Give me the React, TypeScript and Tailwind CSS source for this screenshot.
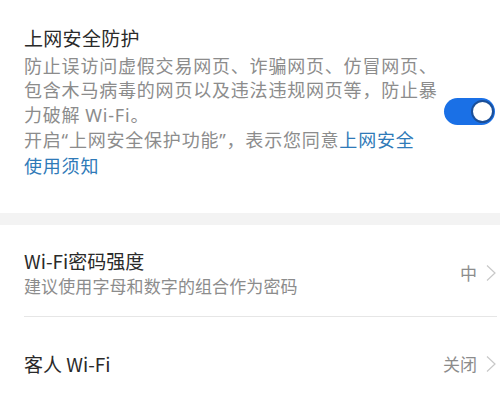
import React from "react";

const font = { fontFamily: '"Noto Sans CJK SC", "Noto Sans", sans-serif' };
const latin = { fontFamily: '"Noto Sans", "Noto Sans CJK SC", sans-serif' };

function Chevron() {
  return (
    <svg width="12" height="18" viewBox="0 0 12 18" className="shrink-0">
      <path d="M2 1.5 L10 9 L2 16.5" fill="none" stroke="#c8c8c8" strokeWidth="1.2" />
    </svg>
  );
}

export default function App() {
  return (
    <div className="w-[500px] h-[404px] overflow-hidden bg-white" style={font}>
      {/* Section 1 */}
      <div className="flex items-start pl-6 pr-[5px] h-[213px]">
        <div className="flex-1 pt-[25px]">
          <div className="text-[19px] leading-[26px] tracking-[0.3px] text-[#2a2a2a]">上网安全防护</div>
          <div className="mt-[2px] text-[18px] leading-[24.4px] tracking-[0.8px] text-[#8c8c8c]">
            防止误访问虚假交易网页、诈骗网页、仿冒网页、
            <br />
            包含木马病毒的网页以及违法违规网页等，防止暴
            <br />
            力破解 <span style={latin}>Wi-Fi</span>。
            <br />
            开启<span style={latin}>“</span>上网安全保护功能<span style={latin}>”</span>，表示您同意
            <span className="text-[#2f7ab8]">上网安全</span>
            <br />
            <span className="text-[#2f7ab8]">使用须知</span>
          </div>
        </div>
        <div className="mt-[98px] w-[51px] h-[27px] rounded-full bg-[#1a70e6] flex items-center justify-end pr-[1px] shrink-0">
          <div className="w-[23px] h-[23px] rounded-full bg-white border-2 border-[#1b4f98]" />
        </div>
      </div>

      {/* Band */}
      <div className="h-[12px] bg-[#f3f3f3]" />

      {/* Row 2 */}
      <div className="pl-6 pr-[3px]">
        <div className="flex items-center pt-[23px] pb-[18px] border-b border-[#e6e6e6]">
          <div className="flex-1">
            <div className="text-[19px] leading-[26px] text-[#2a2a2a]">Wi-Fi密码强度</div>
            <div className="text-[17px] leading-[24px] tracking-[0.1px] text-[#8c8c8c]">建议使用字母和数字的组合作为密码</div>
          </div>
          <div className="flex items-center gap-[8px]">
            <span className="text-[17px] text-[#8c8c8c]">中</span>
            <Chevron />
          </div>
        </div>
        <div className="flex items-center h-[94px]">
          <div className="flex-1 text-[19px] leading-[26px] text-[#2a2a2a]">客人 Wi-Fi</div>
          <div className="flex items-center gap-[8px]">
            <span className="text-[17px] text-[#8c8c8c]">关闭</span>
            <Chevron />
          </div>
        </div>
      </div>
    </div>
  );
}
